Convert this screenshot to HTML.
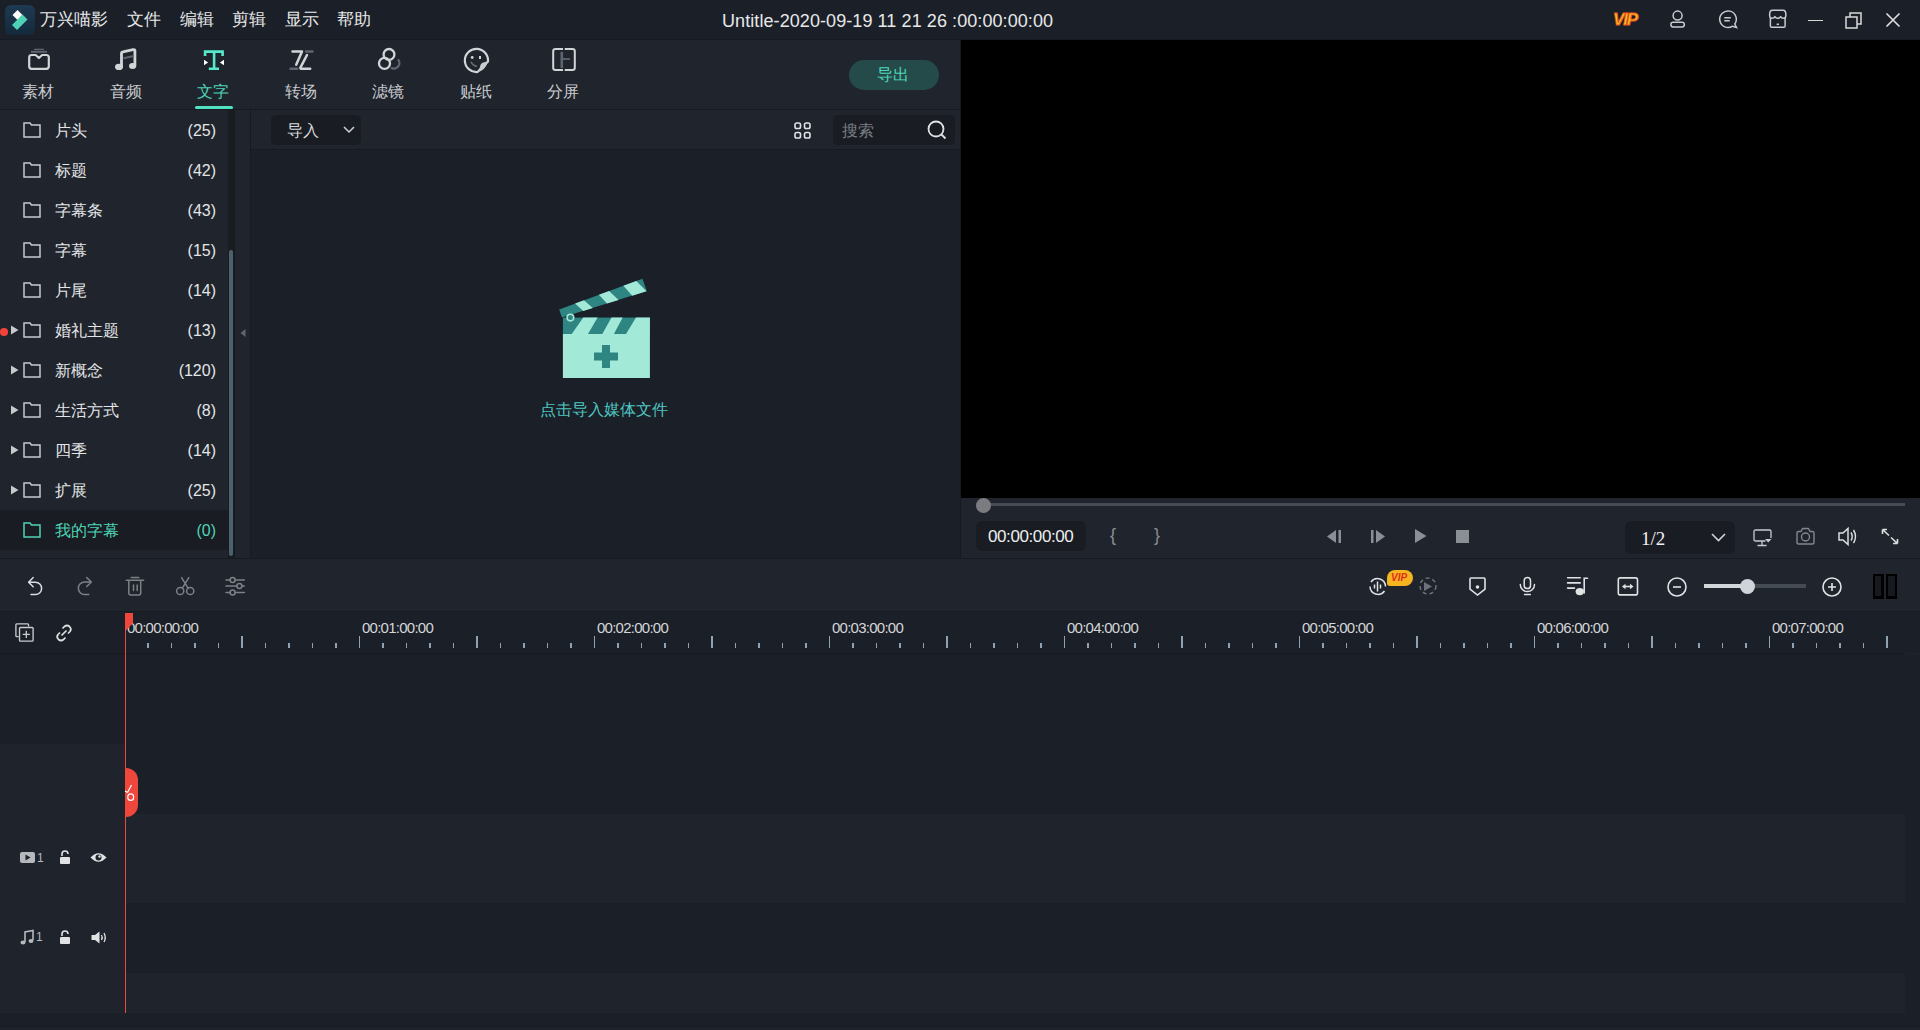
<!DOCTYPE html>
<html><head><meta charset="utf-8">
<style>
body{--title:#1b2028;--panel:#1f242d;--content:#1b1f28;--line:#171a20;--input:#191c22;--tlbar:#1f242d;--tra:#1b1f27;--trb:#1f242c;--bottom:#191c22}
*{box-sizing:border-box;margin:0;padding:0}
html,body{width:1920px;height:1030px;overflow:hidden;background:var(--panel);font-family:"Liberation Sans",sans-serif;color:#d6d8dc}
.a{position:absolute}
.t{position:absolute;white-space:nowrap;line-height:1}
svg{position:absolute;overflow:visible}
</style></head><body>
<!-- TITLE BAR -->
<div class="a" style="left:0;top:0;width:1920px;height:40px;background:var(--title)"></div>
<div class="a" style="left:5px;top:5px;width:30px;height:30px;border-radius:6px;background:linear-gradient(#1d3a52,#142a3c)"></div>
<svg style="left:5px;top:5px" width="30" height="30" viewBox="0 0 30 30">
<path d="M12.5 5 L17.5 10 L12.5 15 L7.5 10Z" fill="#fff"/>
<path d="M22.5 14.5 L12 25 L7 20 L17.5 9.5Z" fill="#4fd2b6"/>
</svg>
<div class="t" style="left:40px;top:11px;font-size:17px;color:#e8e8e8">万兴喵影</div>
<div class="t" style="left:127px;top:11px;font-size:17px;color:#e8e8e8">文件</div>
<div class="t" style="left:180px;top:11px;font-size:17px;color:#e8e8e8">编辑</div>
<div class="t" style="left:232px;top:11px;font-size:17px;color:#e8e8e8">剪辑</div>
<div class="t" style="left:285px;top:11px;font-size:17px;color:#e8e8e8">显示</div>
<div class="t" style="left:337px;top:11px;font-size:17px;color:#e8e8e8">帮助</div>
<div class="t" style="left:722px;top:12px;font-size:18px;letter-spacing:0.08px;color:#e8e8e8">Untitle-2020-09-19 11 21 26 :00:00:00:00</div>

<!-- title right icons -->
<div class="t" style="left:1613px;top:11px;font-size:17px;font-weight:bold;font-style:italic;color:#ffc425;-webkit-text-stroke:0.9px #f0561c;letter-spacing:-1.2px">VIP</div>
<svg style="left:1668px;top:9px" width="20" height="20" viewBox="0 0 20 20" fill="none" stroke="#c9cbcf" stroke-width="1.5">
<circle cx="9.6" cy="6.6" r="4.5"/><rect x="2.9" y="13.2" width="13.4" height="4.8" rx="2.2"/></svg>
<svg style="left:1718px;top:9px" width="20" height="20" viewBox="0 0 20 20" fill="none" stroke="#c9cbcf" stroke-width="1.5">
<path d="M16.8 15 A8.3 8.3 0 1 0 14.5 17.2 L18.5 18.5 Z"/><path d="M6.3 8.7H12.8 M6.3 11.8H11.7"/></svg>
<svg style="left:1768px;top:9px" width="20" height="20" viewBox="0 0 20 20" fill="none" stroke="#c9cbcf" stroke-width="1.5" stroke-linejoin="round"><path d="M1.6 6 Q1.6 1.3 4.5 1.3 H15 Q17.9 1.3 17.9 6 Q17.9 9.3 15.6 9.3 Q13.3 9.3 12.6 7.6 Q11.7 9.3 9.75 9.3 Q7.8 9.3 6.9 7.6 Q6.2 9.3 3.9 9.3 Q1.6 9.3 1.6 6Z"/><path d="M2.4 9 V17 Q2.4 18.3 3.7 18.3 H15.8 Q17.1 18.3 17.1 17 V9"/><path d="M8.6 15.3 H11"/></svg>
<div class="a" style="left:1808px;top:19.6px;width:14.5px;height:1.3px;background:#d8d8d8"></div>
<svg style="left:1845px;top:11px" width="18" height="18" viewBox="0 0 18 18" fill="none" stroke="#d8d8d8" stroke-width="1.5">
<rect x="1" y="6" width="11" height="11"/><path d="M5 6V2H16V13H12"/></svg>
<svg style="left:1885px;top:12px" width="16" height="16" viewBox="0 0 16 16" fill="none" stroke="#e0e0e0" stroke-width="1.6">
<path d="M1.5 1.5L14.5 14.5M14.5 1.5L1.5 14.5"/></svg>

<!-- LEFT PANEL -->
<div class="a" style="left:0;top:40px;width:961px;height:518px;background:var(--panel)"></div>
<div class="a" style="left:0;top:109px;width:961px;height:1px;background:var(--line)"></div>
<!-- tabs -->
<svg style="left:22px;top:44px" width="34" height="30" viewBox="0 0 34 30" fill="none">
<path d="M12.1 5.4 H21.9" stroke="#5e656e" stroke-width="1.4"/><path d="M9 7.8 H25" stroke="#5e656e" stroke-width="2"/>
<path d="M13.7 11 H9.7 Q7.2 11 7.2 13.5 V22.3 Q7.2 24.8 9.7 24.8 H24.3 Q26.8 24.8 26.8 22.3 V13.5 Q26.8 11 24.3 11 H20.1 L16.9 14 Z" stroke="#d2d5d8" stroke-width="2.2" stroke-linejoin="round"/></svg>
<svg style="left:108px;top:44px" width="34" height="30" viewBox="0 0 34 30" fill="none">
<path d="M13.5 23 V9 Q13.5 8 15 7.8 L25 5.6 Q26.9 5.3 26.9 6.5 V22" stroke="#d2d5d8" stroke-width="2.8"/>
<path d="M15.5 14.3 L25.7 12" stroke="#5e656e" stroke-width="2"/>
<ellipse cx="11" cy="22.9" rx="4" ry="3.1" fill="#d2d5d8"/><ellipse cx="24.6" cy="22" rx="3.6" ry="3" fill="#d2d5d8"/></svg>
<svg style="left:196px;top:44px" width="34" height="30" viewBox="0 0 34 30" fill="none">
<path d="M9.1 12 V7.6 H26.6 V12 M18.1 7.6 V24.8 M12.8 24.8 H23" stroke="#55eacb" stroke-width="2.6"/>
<path d="M8 15.7 V21.3 L12.1 18.5Z M28 15.7 V21.3 L23.9 18.5Z" fill="#ffffff"/></svg>
<svg style="left:284px;top:44px" width="34" height="30" viewBox="0 0 34 30" fill="none" stroke-width="2.5" stroke-linecap="round" stroke-linejoin="round">
<path d="M8.5 7.4 H18 L12.2 20.7" stroke="#d2d5d8"/><path d="M23 11 L16.3 23.9 Q16.5 24.8 17.5 24.8 H26.2" stroke="#d2d5d8"/>
<path d="M22 7.4 H28.5 M6.5 24.8 H13.3" stroke="#5e656e"/></svg>
<svg style="left:376px;top:47px" width="26" height="25" viewBox="0 0 26 25" fill="none" stroke-width="2">
<path d="M21.9 12.3 A5.5 5.5 0 0 1 15 20.75" stroke="#5e656e" stroke-width="2.3"/>
<circle cx="13" cy="7.4" r="5.4" stroke="#d2d5d8" stroke-width="2.3"/><circle cx="8.5" cy="16.4" r="5.5" stroke="#d2d5d8" stroke-width="2.3"/></svg>
<svg style="left:463px;top:47px" width="27" height="27" viewBox="0 0 27 27" fill="none">
<path d="M25 14.5 A11.6 11.6 0 1 0 14.5 25 Z" stroke="#d2d5d8" stroke-width="2.2"/>
<path d="M25 14.5 Q18 15 17.5 18 Q16.5 23 14.5 25 Q22 24 25 14.5Z" fill="#c9ccd0"/>
<circle cx="9.2" cy="10.5" r="1.4" fill="#d2d5d8"/><rect x="16" y="9" width="2" height="3" fill="#d2d5d8"/>
<path d="M8 14.8 Q9.5 18.5 14 19.5" stroke="#6b7178" stroke-width="1.6"/></svg>
<svg style="left:552px;top:48px" width="24" height="24" viewBox="0 0 24 24" fill="none" stroke-width="2">
<path d="M11 1 H3.5 Q1.2 1 1.2 3.3 V19.7 Q1.2 22 3.5 22 H11" stroke="#d2d5d8"/>
<path d="M12.7 1 H20.5 Q22.8 1 22.8 3.3 V19.7 Q22.8 22 20.5 22 H12.7" stroke="#d2d5d8"/>
<path d="M9.8 3.8 V20" stroke="#5e656e" stroke-width="2.6"/><path d="M11 11 H18" stroke="#5e656e" stroke-width="1.8"/></svg>
<div class="t" style="left:22px;top:84px;font-size:16px;color:#c9cbcf">素材</div>
<div class="t" style="left:110px;top:84px;font-size:16px;color:#c9cbcf">音频</div>
<div class="t" style="left:197px;top:84px;font-size:16px;color:#4ed3b6">文字</div>
<div class="t" style="left:285px;top:84px;font-size:16px;color:#c9cbcf">转场</div>
<div class="t" style="left:372px;top:84px;font-size:16px;color:#c9cbcf">滤镜</div>
<div class="t" style="left:460px;top:84px;font-size:16px;color:#c9cbcf">贴纸</div>
<div class="t" style="left:547px;top:84px;font-size:16px;color:#c9cbcf">分屏</div>
<div class="a" style="left:195px;top:106px;width:38px;height:3px;border-radius:2px;background:#4fe3c2"></div>
<div class="a" style="left:849px;top:60px;width:90px;height:30px;border-radius:15px;background:#244b4a"></div>
<div class="t" style="left:877px;top:67px;font-size:16px;color:#4fd8bb">导出</div>

<!-- folder list -->
<div class="a" style="left:0;top:510px;width:228px;height:40px;background:var(--input)"></div>
<svg style="left:23px;top:122px" width="18" height="16" viewBox="0 0 18 16" fill="none" stroke="#c8cacd" stroke-width="1.5"><path d="M1 1 H7 L8.5 3 H17 V15 H1Z"/></svg>
<div class="t" style="left:55px;top:123px;font-size:16px;color:#e4e5e7">片头</div>
<div class="t" style="right:1704px;top:123px;font-size:16px;color:#e4e5e7">(25)</div>
<svg style="left:23px;top:162px" width="18" height="16" viewBox="0 0 18 16" fill="none" stroke="#c8cacd" stroke-width="1.5"><path d="M1 1 H7 L8.5 3 H17 V15 H1Z"/></svg>
<div class="t" style="left:55px;top:163px;font-size:16px;color:#e4e5e7">标题</div>
<div class="t" style="right:1704px;top:163px;font-size:16px;color:#e4e5e7">(42)</div>
<svg style="left:23px;top:202px" width="18" height="16" viewBox="0 0 18 16" fill="none" stroke="#c8cacd" stroke-width="1.5"><path d="M1 1 H7 L8.5 3 H17 V15 H1Z"/></svg>
<div class="t" style="left:55px;top:203px;font-size:16px;color:#e4e5e7">字幕条</div>
<div class="t" style="right:1704px;top:203px;font-size:16px;color:#e4e5e7">(43)</div>
<svg style="left:23px;top:242px" width="18" height="16" viewBox="0 0 18 16" fill="none" stroke="#c8cacd" stroke-width="1.5"><path d="M1 1 H7 L8.5 3 H17 V15 H1Z"/></svg>
<div class="t" style="left:55px;top:243px;font-size:16px;color:#e4e5e7">字幕</div>
<div class="t" style="right:1704px;top:243px;font-size:16px;color:#e4e5e7">(15)</div>
<svg style="left:23px;top:282px" width="18" height="16" viewBox="0 0 18 16" fill="none" stroke="#c8cacd" stroke-width="1.5"><path d="M1 1 H7 L8.5 3 H17 V15 H1Z"/></svg>
<div class="t" style="left:55px;top:283px;font-size:16px;color:#e4e5e7">片尾</div>
<div class="t" style="right:1704px;top:283px;font-size:16px;color:#e4e5e7">(14)</div>
<svg style="left:23px;top:322px" width="18" height="16" viewBox="0 0 18 16" fill="none" stroke="#c8cacd" stroke-width="1.5"><path d="M1 1 H7 L8.5 3 H17 V15 H1Z"/></svg>
<div class="t" style="left:55px;top:323px;font-size:16px;color:#e4e5e7">婚礼主题</div>
<div class="t" style="right:1704px;top:323px;font-size:16px;color:#e4e5e7">(13)</div>
<svg style="left:10px;top:325px" width="8" height="10" viewBox="0 0 8 10"><path d="M1 0.5 L8.5 5 L1 9.5Z" fill="#c8cacd"/></svg>
<svg style="left:23px;top:362px" width="18" height="16" viewBox="0 0 18 16" fill="none" stroke="#c8cacd" stroke-width="1.5"><path d="M1 1 H7 L8.5 3 H17 V15 H1Z"/></svg>
<div class="t" style="left:55px;top:363px;font-size:16px;color:#e4e5e7">新概念</div>
<div class="t" style="right:1704px;top:363px;font-size:16px;color:#e4e5e7">(120)</div>
<svg style="left:10px;top:365px" width="8" height="10" viewBox="0 0 8 10"><path d="M1 0.5 L8.5 5 L1 9.5Z" fill="#c8cacd"/></svg>
<svg style="left:23px;top:402px" width="18" height="16" viewBox="0 0 18 16" fill="none" stroke="#c8cacd" stroke-width="1.5"><path d="M1 1 H7 L8.5 3 H17 V15 H1Z"/></svg>
<div class="t" style="left:55px;top:403px;font-size:16px;color:#e4e5e7">生活方式</div>
<div class="t" style="right:1704px;top:403px;font-size:16px;color:#e4e5e7">(8)</div>
<svg style="left:10px;top:405px" width="8" height="10" viewBox="0 0 8 10"><path d="M1 0.5 L8.5 5 L1 9.5Z" fill="#c8cacd"/></svg>
<svg style="left:23px;top:442px" width="18" height="16" viewBox="0 0 18 16" fill="none" stroke="#c8cacd" stroke-width="1.5"><path d="M1 1 H7 L8.5 3 H17 V15 H1Z"/></svg>
<div class="t" style="left:55px;top:443px;font-size:16px;color:#e4e5e7">四季</div>
<div class="t" style="right:1704px;top:443px;font-size:16px;color:#e4e5e7">(14)</div>
<svg style="left:10px;top:445px" width="8" height="10" viewBox="0 0 8 10"><path d="M1 0.5 L8.5 5 L1 9.5Z" fill="#c8cacd"/></svg>
<svg style="left:23px;top:482px" width="18" height="16" viewBox="0 0 18 16" fill="none" stroke="#c8cacd" stroke-width="1.5"><path d="M1 1 H7 L8.5 3 H17 V15 H1Z"/></svg>
<div class="t" style="left:55px;top:483px;font-size:16px;color:#e4e5e7">扩展</div>
<div class="t" style="right:1704px;top:483px;font-size:16px;color:#e4e5e7">(25)</div>
<svg style="left:10px;top:485px" width="8" height="10" viewBox="0 0 8 10"><path d="M1 0.5 L8.5 5 L1 9.5Z" fill="#c8cacd"/></svg>
<svg style="left:23px;top:522px" width="18" height="16" viewBox="0 0 18 16" fill="none" stroke="#4ed3b6" stroke-width="1.5"><path d="M1 1 H7 L8.5 3 H17 V15 H1Z"/></svg>
<div class="t" style="left:55px;top:523px;font-size:16px;color:#4ed3b6">我的字幕</div>
<div class="t" style="right:1704px;top:523px;font-size:16px;color:#4ed3b6">(0)</div>
<div class="a" style="left:0px;top:328px;width:7.5px;height:7.5px;border-radius:50%;background:#f0433a"></div>
<div class="a" style="left:228px;top:110px;width:5px;height:448px;background:#191c20"></div>
<div class="a" style="left:228.5px;top:250px;width:4.5px;height:306px;border-radius:2px;background:#4d606e"></div>
<div class="a" style="left:233px;top:110px;width:2px;height:448px;background:var(--line)"></div>
<div class="a" style="left:250px;top:110px;width:1px;height:448px;background:var(--line)"></div>
<svg style="left:240px;top:328px" width="6" height="10" viewBox="0 0 6 10"><path d="M5.5 1 L0.5 5 L5.5 9Z" fill="#5d6670"/></svg>
<!-- content toolbar -->
<div class="a" style="left:251px;top:150px;width:709px;height:408px;background:var(--content)"></div>
<div class="a" style="left:0;top:39px;width:1920px;height:1px;background:var(--line)"></div>
<div class="a" style="left:251px;top:149px;width:710px;height:1px;background:var(--line)"></div>
<div class="a" style="left:271px;top:115px;width:90px;height:30px;border-radius:5px;background:var(--input)"></div>
<div class="t" style="left:287px;top:123px;font-size:16px;color:#d6d8dc">导入</div>
<svg style="left:343px;top:126px" width="12" height="8" viewBox="0 0 12 8" fill="none" stroke="#d0d2d5" stroke-width="1.5"><path d="M1 1 L6 6 L11 1"/></svg>
<svg style="left:794px;top:122px" width="17" height="17" viewBox="0 0 17 17" fill="none" stroke="#e0e2e5" stroke-width="1.6"><rect x="1" y="1" width="5.5" height="5.5" rx="1.8"/><rect x="10.5" y="1" width="5.5" height="5.5" rx="1.8"/><rect x="1" y="10.5" width="5.5" height="5.5" rx="1.8"/><rect x="10.5" y="10.5" width="5.5" height="5.5" rx="1.8"/></svg>
<div class="a" style="left:833px;top:115px;width:122px;height:30px;border-radius:5px;background:var(--input)"></div>
<div class="t" style="left:842px;top:123px;font-size:16px;color:#7b7f85">搜索</div>
<svg style="left:927px;top:120px" width="20" height="20" viewBox="0 0 20 20" fill="none" stroke="#e0e2e5" stroke-width="1.8"><circle cx="9" cy="9" r="7.5"/><path d="M14.5 14.5 L18.5 18.5"/></svg>
<!-- clapboard -->
<svg style="left:550px;top:270px" width="110" height="115" viewBox="0 0 110 115">
<path d="M9.2 39.4 L92.4 8.8 L96.8 21.1 L11.9 47.6Z" fill="#2e8582"/>
<path d="M25.1 33.55 L34 30.28 L42.8 37.96 L33.3 40.92Z M48.9 24.8 L59.1 21.05 L68.6 29.9 L57 33.52Z M73.4 15.79 L86.3 11.04 L96.5 21.2 L82.2 25.66Z" fill="#a3e9d8"/>
<rect x="12.9" y="47.6" width="87" height="16.4" fill="#2e8582"/>
<path d="M33.3 47.6 H47.6 L38 64 H21.7Z M61.5 47.6 H72.7 L63.9 64 H52.3Z M86 47.6 H99.9 V64 H76Z" fill="#a3e9d8"/>
<circle cx="20.4" cy="47.6" r="3.3" fill="#2e8582" stroke="#a3e9d8" stroke-width="1.6"/>
<rect x="12.9" y="64" width="87" height="44" fill="#a3e9d8"/>
<path d="M52 75 H60 V82.5 H68 V90.5 H60 V98 H52 V90.5 H44 V82.5 H52Z" fill="#2e8582"/>
</svg>
<div class="t" style="left:540px;top:402px;font-size:16px;color:#4ec6c0">点击导入媒体文件</div>

<!-- PREVIEW -->
<div class="a" style="left:960px;top:40px;width:1px;height:518px;background:var(--line)"></div>
<div class="a" style="left:961px;top:40px;width:959px;height:458px;background:#000"></div>
<div class="a" style="left:983px;top:503px;width:922px;height:3px;background:#464c54"></div>
<div class="a" style="left:976px;top:498px;width:15px;height:15px;border-radius:50%;background:#7a7c80"></div>
<div class="a" style="left:976px;top:521px;width:110px;height:30px;border-radius:6px;background:var(--input)"></div>
<div class="t" style="left:988px;top:528px;font-size:17px;letter-spacing:-0.4px;color:#eceef0">00:00:00:00</div>
<div class="t" style="left:1110px;top:526px;font-size:18px;color:#8a8e93">{</div>
<div class="t" style="left:1154px;top:526px;font-size:18px;color:#8a8e93">}</div>
<svg style="left:1327px;top:530px" width="15" height="13" viewBox="0 0 15 13" fill="#8a8f96"><path d="M0 6.5 L9 0 V13Z"/><rect x="11.5" y="0" width="2.5" height="13"/></svg>
<svg style="left:1371px;top:530px" width="15" height="13" viewBox="0 0 15 13" fill="#8a8f96"><rect x="0" y="0" width="2.5" height="13"/><path d="M5 0 L14 6.5 L5 13Z"/></svg>
<svg style="left:1415px;top:529px" width="12" height="14" viewBox="0 0 12 14" fill="#8a8f96"><path d="M0 0 L11.5 7 L0 14Z"/></svg>
<div class="a" style="left:1456px;top:530px;width:13px;height:13px;background:#8a8f96"></div>
<div class="a" style="left:1625px;top:521px;width:110px;height:33px;border-radius:6px;background:var(--input)"></div>
<div class="t" style="left:1641px;top:529px;font-size:19px;font-family:'Liberation Serif',serif;color:#f0f0f0">1/2</div>
<svg style="left:1711px;top:533px" width="15" height="9" viewBox="0 0 15 9" fill="none" stroke="#d0d2d5" stroke-width="1.6"><path d="M1 1 L7.5 7.5 L14 1"/></svg>
<svg style="left:1753px;top:529px" width="20" height="18" viewBox="0 0 20 18" fill="none" stroke="#c9cbcf" stroke-width="1.3" stroke-linejoin="round"><path d="M12.5 12 H2.5 Q1 12 1 10.5 V2.5 Q1 1 2.5 1 H16.5 Q18 1 18 2.5 V9 M9 12 V16.5 M4.5 16.5 H13.5"/><path d="M12 10 H18.5 L15.2 13.5Z" fill="#c9cbcf" stroke="none"/></svg>
<svg style="left:1796px;top:527px" width="19" height="18" viewBox="0 0 19 18" fill="none" stroke="#84888d" stroke-width="1.4" stroke-linejoin="round"><path d="M2.5 4.5 H5 L6.5 1.5 H12.5 L14 4.5 H16.5 Q18 4.5 18 6 V15.5 Q18 17 16.5 17 H2.5 Q1 17 1 15.5 V6 Q1 4.5 2.5 4.5Z"/><circle cx="9.5" cy="10" r="4"/></svg>
<svg style="left:1838px;top:527px" width="19" height="19" viewBox="0 0 19 19" fill="none" stroke="#dcdee0" stroke-width="1.5"><path d="M1 6 H5 L10 1.5 V17.5 L5 13 H1Z"/><path d="M13 5.5 Q15.5 9.5 13 13.5 M15.5 3 Q19.5 9.5 15.5 16"/></svg>
<svg style="left:1881px;top:528px" width="18" height="17" viewBox="0 0 18 17" fill="none" stroke="#dcdee0" stroke-width="1.6"><path d="M1.5 1.5 L8 7.5 M1.5 1.5 V6 M1.5 1.5 H6 M16.5 15.5 L10 9.5 M16.5 15.5 V11 M16.5 15.5 H12"/></svg>
<!-- separator -->
<div class="a" style="left:0;top:558px;width:1920px;height:1px;background:var(--line)"></div>
<!-- TIMELINE TOOLBAR -->
<div class="a" style="left:0;top:559px;width:1920px;height:52px;background:var(--tlbar)"></div>
<div class="a" style="left:0;top:611px;width:1920px;height:1px;background:var(--line)"></div>
<svg style="left:0;top:560px" width="260" height="52" viewBox="0 0 260 52" fill="none" stroke-width="1.5" stroke-linecap="round" stroke-linejoin="round">
<path d="M33.2 17.6 L28.6 22.3 L33.2 26.7 M29 22.3 H35.5 A6.1 6.1 0 0 1 35.5 34.5 H31" stroke="#dcdee0"/>
<path d="M86.7 17.6 L91.4 22 L86.7 26.5 M91.2 22 H84.6 A6.2 6.2 0 0 0 84.6 34.5 H88.7" stroke="#7d8186"/>
<path d="M126.3 20.3 H143.6 M131.3 17.6 H138.8 M128.8 20.3 V33 Q128.8 34.9 130.7 34.9 H138.8 Q140.7 34.9 140.7 33 V20.3 M133.5 25 V30.5 M137.2 25 V30.5" stroke="#7d8186"/>
<circle cx="180.2" cy="31" r="3.6" stroke="#7d8186"/><circle cx="190.2" cy="31" r="3.6" stroke="#7d8186"/>
<path d="M181.6 17.6 L187.9 27.8 M188.8 17.6 L182.5 27.8" stroke="#7d8186"/>
<path d="M226 20 H230 M235.2 20 H244.3 M226 26.1 H237 M241.8 26.1 H244.3 M226 32.5 H230 M235.2 32.5 H244.3" stroke="#7d8186"/>
<circle cx="232.6" cy="20" r="2.5" stroke="#7d8186"/><circle cx="239.4" cy="26.1" r="2.5" stroke="#7d8186"/><circle cx="232.6" cy="32.5" r="2.5" stroke="#7d8186"/>
</svg>
<svg style="left:1368px;top:577px" width="20" height="19" viewBox="0 0 20 19" fill="none" stroke="#e0e2e4" stroke-width="1.5"><path d="M17.5 9.5 A8 8 0 0 0 3 5 M2 9.5 A8 8 0 0 0 16.5 14"/><path d="M9.5 4.5 V14.5 M6.5 7.5 V11.5 M12.5 7.5 V11.5"/></svg>
<div class="a" style="left:1387px;top:570px;width:26px;height:16px;border-radius:8px 8px 8px 3px;background:#f6b420"></div>
<div class="t" style="left:1391px;top:573px;font-size:10px;font-weight:bold;font-style:italic;color:#e02f1c">VIP</div>
<svg style="left:1419px;top:577px" width="18" height="18" viewBox="0 0 18 18" fill="none" stroke="#6e7278" stroke-width="1.5" stroke-dasharray="4 3"><circle cx="9" cy="9" r="8"/></svg>
<svg style="left:1424px;top:582px" width="8" height="9" viewBox="0 0 8 9" fill="#6e7278"><path d="M0 0 L8 4.5 L0 9Z"/></svg>
<svg style="left:1469px;top:577px" width="17" height="19" viewBox="0 0 17 19" fill="none" stroke="#e0e2e4" stroke-width="1.6"><path d="M1 2 Q1 1 2 1 H15 Q16 1 16 2 V12 L8.5 18 L1 12Z"/><circle cx="8.5" cy="10" r="1" fill="#e0e2e4"/></svg>
<svg style="left:1510px;top:570px" width="34" height="30" viewBox="0 0 34 30" fill="none" stroke="#e0e2e4" stroke-width="1.5" stroke-linecap="round"><rect x="14.2" y="7.6" width="6.3" height="11" rx="3.15"/><path d="M10.3 14.5 A7.1 7.1 0 0 0 24.5 14.5 M14.5 24.5 H20.3"/></svg>
<svg style="left:1560px;top:570px" width="34" height="30" viewBox="0 0 34 30" fill="none" stroke="#e0e2e4" stroke-width="1.6" stroke-linecap="round"><path d="M7.6 7.8 H20.2 M7.6 12.9 H20.2 M7.6 18.1 H14.5 M24.2 23 V8.3 H27.5"/><ellipse cx="19.8" cy="21.6" rx="4.2" ry="3.6" fill="#e0e2e4" stroke="none"/></svg>
<svg style="left:1610px;top:570px" width="34" height="30" viewBox="0 0 34 30" fill="none" stroke="#e0e2e4" stroke-width="1.6"><rect x="8.3" y="7.9" width="19.2" height="17" rx="2"/><path d="M13.5 16.5 H22"/><path d="M12 16.5 L15.5 13.8 V19.2Z M23.5 16.5 L20 13.8 V19.2Z" fill="#e0e2e4" stroke="none"/></svg>
<svg style="left:1667px;top:577px" width="20" height="20" viewBox="0 0 20 20" fill="none" stroke="#e0e2e4" stroke-width="1.6"><circle cx="10" cy="10" r="9"/><path d="M6 10 H14"/></svg>
<div class="a" style="left:1704px;top:584px;width:102px;height:4px;background:#454b53"></div>
<div class="a" style="left:1704px;top:584px;width:44px;height:4px;background:#d3d6d9"></div>
<div class="a" style="left:1740px;top:579px;width:15px;height:15px;border-radius:50%;background:#cfd4da"></div>
<svg style="left:1822px;top:577px" width="20" height="20" viewBox="0 0 20 20" fill="none" stroke="#e0e2e4" stroke-width="1.6"><circle cx="10" cy="10" r="9"/><path d="M6 10 H14 M10 6 V14"/></svg>
<div class="a" style="left:1873px;top:574px;width:11px;height:25px;background:#16191e;border:2px solid #000;border-right-width:3px;border-bottom-width:3px"></div>
<div class="a" style="left:1886px;top:574px;width:11px;height:25px;background:#16191e;border:2px solid #000;border-bottom-width:3px"></div>

<!-- RULER -->
<div class="a" style="left:0;top:612px;width:1920px;height:41px;background:var(--tra)"></div>
<div class="a" style="left:0;top:653px;width:1905px;height:1px;background:var(--line)"></div>
<svg style="left:15px;top:623px" width="19" height="19" viewBox="0 0 21 21" fill="none" stroke="#c9cbcf" stroke-width="1.5"><path d="M4 15 H2 Q1 15 1 14 V2 Q1 1 2 1 H14 Q15 1 15 2 V4"/><rect x="5" y="5" width="15" height="15" rx="1"/><path d="M12.5 8.5 V16.5 M8.5 12.5 H16.5"/></svg>
<svg style="left:55px;top:624px" width="18" height="18" viewBox="0 0 18 18" fill="none" stroke="#dcdee0" stroke-width="1.7"><path d="M7.5 4.5 L9.5 2.5 Q12 0.5 14.5 2.5 Q17 5 15 7.5 L13 9.5 M10.5 13.5 L8.5 15.5 Q6 17.5 3.5 15.5 Q1 13 3 10.5 L5 8.5 M6.5 11.5 L11.5 6.5"/></svg>
<div class="a" style="left:147.3px;top:643px;width:1.5px;height:5px;background:#8ea2b3"></div>
<div class="a" style="left:170.8px;top:643px;width:1.5px;height:5px;background:#8ea2b3"></div>
<div class="a" style="left:194.3px;top:643px;width:1.5px;height:5px;background:#8ea2b3"></div>
<div class="a" style="left:217.8px;top:643px;width:1.5px;height:5px;background:#8ea2b3"></div>
<div class="a" style="left:241.3px;top:636px;width:1.5px;height:12px;background:#8ea2b3"></div>
<div class="a" style="left:264.8px;top:643px;width:1.5px;height:5px;background:#8ea2b3"></div>
<div class="a" style="left:288.3px;top:643px;width:1.5px;height:5px;background:#8ea2b3"></div>
<div class="a" style="left:311.8px;top:643px;width:1.5px;height:5px;background:#8ea2b3"></div>
<div class="a" style="left:335.3px;top:643px;width:1.5px;height:5px;background:#8ea2b3"></div>
<div class="a" style="left:358.8px;top:636px;width:1.5px;height:12px;background:#8ea2b3"></div>
<div class="a" style="left:382.3px;top:643px;width:1.5px;height:5px;background:#8ea2b3"></div>
<div class="a" style="left:405.8px;top:643px;width:1.5px;height:5px;background:#8ea2b3"></div>
<div class="a" style="left:429.3px;top:643px;width:1.5px;height:5px;background:#8ea2b3"></div>
<div class="a" style="left:452.8px;top:643px;width:1.5px;height:5px;background:#8ea2b3"></div>
<div class="a" style="left:476.3px;top:636px;width:1.5px;height:12px;background:#8ea2b3"></div>
<div class="a" style="left:499.8px;top:643px;width:1.5px;height:5px;background:#8ea2b3"></div>
<div class="a" style="left:523.3px;top:643px;width:1.5px;height:5px;background:#8ea2b3"></div>
<div class="a" style="left:546.8px;top:643px;width:1.5px;height:5px;background:#8ea2b3"></div>
<div class="a" style="left:570.3px;top:643px;width:1.5px;height:5px;background:#8ea2b3"></div>
<div class="a" style="left:593.8px;top:636px;width:1.5px;height:12px;background:#8ea2b3"></div>
<div class="a" style="left:617.3px;top:643px;width:1.5px;height:5px;background:#8ea2b3"></div>
<div class="a" style="left:640.8px;top:643px;width:1.5px;height:5px;background:#8ea2b3"></div>
<div class="a" style="left:664.3px;top:643px;width:1.5px;height:5px;background:#8ea2b3"></div>
<div class="a" style="left:687.8px;top:643px;width:1.5px;height:5px;background:#8ea2b3"></div>
<div class="a" style="left:711.3px;top:636px;width:1.5px;height:12px;background:#8ea2b3"></div>
<div class="a" style="left:734.8px;top:643px;width:1.5px;height:5px;background:#8ea2b3"></div>
<div class="a" style="left:758.3px;top:643px;width:1.5px;height:5px;background:#8ea2b3"></div>
<div class="a" style="left:781.8px;top:643px;width:1.5px;height:5px;background:#8ea2b3"></div>
<div class="a" style="left:805.3px;top:643px;width:1.5px;height:5px;background:#8ea2b3"></div>
<div class="a" style="left:828.8px;top:636px;width:1.5px;height:12px;background:#8ea2b3"></div>
<div class="a" style="left:852.3px;top:643px;width:1.5px;height:5px;background:#8ea2b3"></div>
<div class="a" style="left:875.8px;top:643px;width:1.5px;height:5px;background:#8ea2b3"></div>
<div class="a" style="left:899.3px;top:643px;width:1.5px;height:5px;background:#8ea2b3"></div>
<div class="a" style="left:922.8px;top:643px;width:1.5px;height:5px;background:#8ea2b3"></div>
<div class="a" style="left:946.3px;top:636px;width:1.5px;height:12px;background:#8ea2b3"></div>
<div class="a" style="left:969.8px;top:643px;width:1.5px;height:5px;background:#8ea2b3"></div>
<div class="a" style="left:993.3px;top:643px;width:1.5px;height:5px;background:#8ea2b3"></div>
<div class="a" style="left:1016.8px;top:643px;width:1.5px;height:5px;background:#8ea2b3"></div>
<div class="a" style="left:1040.3px;top:643px;width:1.5px;height:5px;background:#8ea2b3"></div>
<div class="a" style="left:1063.8px;top:636px;width:1.5px;height:12px;background:#8ea2b3"></div>
<div class="a" style="left:1087.3px;top:643px;width:1.5px;height:5px;background:#8ea2b3"></div>
<div class="a" style="left:1110.8px;top:643px;width:1.5px;height:5px;background:#8ea2b3"></div>
<div class="a" style="left:1134.3px;top:643px;width:1.5px;height:5px;background:#8ea2b3"></div>
<div class="a" style="left:1157.8px;top:643px;width:1.5px;height:5px;background:#8ea2b3"></div>
<div class="a" style="left:1181.3px;top:636px;width:1.5px;height:12px;background:#8ea2b3"></div>
<div class="a" style="left:1204.8px;top:643px;width:1.5px;height:5px;background:#8ea2b3"></div>
<div class="a" style="left:1228.3px;top:643px;width:1.5px;height:5px;background:#8ea2b3"></div>
<div class="a" style="left:1251.8px;top:643px;width:1.5px;height:5px;background:#8ea2b3"></div>
<div class="a" style="left:1275.3px;top:643px;width:1.5px;height:5px;background:#8ea2b3"></div>
<div class="a" style="left:1298.8px;top:636px;width:1.5px;height:12px;background:#8ea2b3"></div>
<div class="a" style="left:1322.3px;top:643px;width:1.5px;height:5px;background:#8ea2b3"></div>
<div class="a" style="left:1345.8px;top:643px;width:1.5px;height:5px;background:#8ea2b3"></div>
<div class="a" style="left:1369.3px;top:643px;width:1.5px;height:5px;background:#8ea2b3"></div>
<div class="a" style="left:1392.8px;top:643px;width:1.5px;height:5px;background:#8ea2b3"></div>
<div class="a" style="left:1416.3px;top:636px;width:1.5px;height:12px;background:#8ea2b3"></div>
<div class="a" style="left:1439.8px;top:643px;width:1.5px;height:5px;background:#8ea2b3"></div>
<div class="a" style="left:1463.3px;top:643px;width:1.5px;height:5px;background:#8ea2b3"></div>
<div class="a" style="left:1486.8px;top:643px;width:1.5px;height:5px;background:#8ea2b3"></div>
<div class="a" style="left:1510.3px;top:643px;width:1.5px;height:5px;background:#8ea2b3"></div>
<div class="a" style="left:1533.8px;top:636px;width:1.5px;height:12px;background:#8ea2b3"></div>
<div class="a" style="left:1557.3px;top:643px;width:1.5px;height:5px;background:#8ea2b3"></div>
<div class="a" style="left:1580.8px;top:643px;width:1.5px;height:5px;background:#8ea2b3"></div>
<div class="a" style="left:1604.3px;top:643px;width:1.5px;height:5px;background:#8ea2b3"></div>
<div class="a" style="left:1627.8px;top:643px;width:1.5px;height:5px;background:#8ea2b3"></div>
<div class="a" style="left:1651.3px;top:636px;width:1.5px;height:12px;background:#8ea2b3"></div>
<div class="a" style="left:1674.8px;top:643px;width:1.5px;height:5px;background:#8ea2b3"></div>
<div class="a" style="left:1698.3px;top:643px;width:1.5px;height:5px;background:#8ea2b3"></div>
<div class="a" style="left:1721.8px;top:643px;width:1.5px;height:5px;background:#8ea2b3"></div>
<div class="a" style="left:1745.3px;top:643px;width:1.5px;height:5px;background:#8ea2b3"></div>
<div class="a" style="left:1768.8px;top:636px;width:1.5px;height:12px;background:#8ea2b3"></div>
<div class="a" style="left:1792.3px;top:643px;width:1.5px;height:5px;background:#8ea2b3"></div>
<div class="a" style="left:1815.8px;top:643px;width:1.5px;height:5px;background:#8ea2b3"></div>
<div class="a" style="left:1839.3px;top:643px;width:1.5px;height:5px;background:#8ea2b3"></div>
<div class="a" style="left:1862.8px;top:643px;width:1.5px;height:5px;background:#8ea2b3"></div>
<div class="a" style="left:1886.3px;top:636px;width:1.5px;height:12px;background:#8ea2b3"></div>
<div class="t" style="left:127px;top:620px;font-size:15px;letter-spacing:-0.75px;color:#d4d6d9">00:00:00:00</div>
<div class="t" style="left:362px;top:620px;font-size:15px;letter-spacing:-0.75px;color:#d4d6d9">00:01:00:00</div>
<div class="t" style="left:597px;top:620px;font-size:15px;letter-spacing:-0.75px;color:#d4d6d9">00:02:00:00</div>
<div class="t" style="left:832px;top:620px;font-size:15px;letter-spacing:-0.75px;color:#d4d6d9">00:03:00:00</div>
<div class="t" style="left:1067px;top:620px;font-size:15px;letter-spacing:-0.75px;color:#d4d6d9">00:04:00:00</div>
<div class="t" style="left:1302px;top:620px;font-size:15px;letter-spacing:-0.75px;color:#d4d6d9">00:05:00:00</div>
<div class="t" style="left:1537px;top:620px;font-size:15px;letter-spacing:-0.75px;color:#d4d6d9">00:06:00:00</div>
<div class="t" style="left:1772px;top:620px;font-size:15px;letter-spacing:-0.75px;color:#d4d6d9">00:07:00:00</div>

<!-- TRACKS -->
<div class="a" style="left:0;top:654px;width:1920px;height:372px;background:var(--tra)"></div>
<div class="a" style="left:0;top:744px;width:125px;height:269px;background:var(--trb)"></div>
<div class="a" style="left:126px;top:814px;width:1779px;height:89px;background:var(--trb)"></div>
<div class="a" style="left:126px;top:973px;width:1779px;height:40px;background:var(--trb)"></div>
<div class="a" style="left:0;top:1026px;width:1920px;height:1px;background:var(--line)"></div>
<div class="a" style="left:0;top:1027px;width:1920px;height:3px;background:var(--trb)"></div>
<svg style="left:20px;top:851px" width="24" height="13" viewBox="0 0 24 13"><rect x="0" y="1" width="15" height="11" rx="2" fill="#b5b8bc"/><path d="M5.5 3.5 L10.5 6.5 L5.5 9.5Z" fill="#1f232a"/><text x="17" y="11" font-size="12" fill="#b5b8bc" font-family="Liberation Sans">1</text></svg>
<svg style="left:59px;top:850px" width="13" height="15" viewBox="0 0 13 15" fill="none"><path d="M3 6 V4 Q3 1 6 1 Q9 1 9 4" stroke="#e0e2e4" stroke-width="1.6"/><rect x="1" y="7" width="10" height="7" rx="1" fill="#e0e2e4"/></svg>
<svg style="left:90px;top:852px" width="17" height="11" viewBox="0 0 17 11"><path d="M0.5 5.5 Q8.5 -3 16.5 5.5 Q8.5 14 0.5 5.5Z" fill="#e0e2e4"/><circle cx="8.5" cy="5.5" r="3" fill="#1f232a"/><circle cx="9.5" cy="4.5" r="1.2" fill="#e0e2e4"/></svg>
<svg style="left:20px;top:930px" width="24" height="15" viewBox="0 0 24 15"><path d="M5 12 V2 L13 0.5 V10" fill="none" stroke="#b5b8bc" stroke-width="1.6"/><ellipse cx="3" cy="12.5" rx="2.5" ry="2" fill="#b5b8bc"/><ellipse cx="11" cy="11" rx="2.5" ry="2" fill="#b5b8bc"/><text x="16" y="11" font-size="12" fill="#b5b8bc" font-family="Liberation Sans">1</text></svg>
<svg style="left:59px;top:930px" width="13" height="15" viewBox="0 0 13 15" fill="none"><path d="M3 6 V4 Q3 1 6 1 Q9 1 9 4" stroke="#e0e2e4" stroke-width="1.6"/><rect x="1" y="7" width="10" height="7" rx="1" fill="#e0e2e4"/></svg>
<svg style="left:91px;top:931px" width="16" height="13" viewBox="0 0 16 13"><path d="M0.5 4 H4 L8.5 0.5 V12.5 L4 9 H0.5Z" fill="#e0e2e4"/><path d="M10.5 4 Q12 6.5 10.5 9 M13 2 Q15.5 6.5 13 11" fill="none" stroke="#e0e2e4" stroke-width="1.3"/></svg>
<!-- playhead -->
<div class="a" style="left:124.5px;top:613px;width:1.5px;height:400px;background:#f0473d"></div>
<svg style="left:125px;top:613px" width="9" height="19" viewBox="0 0 9 19"><path d="M0 0 H8 V10 L0 18.5Z" fill="#f0473d"/></svg>
<div class="a" style="left:125px;top:768px;width:13px;height:49px;border-radius:0 12px 12px 0;background:#f0473d"></div>
<svg style="left:124px;top:784px" width="12" height="18" viewBox="0 0 12 18" fill="none" stroke="#fff" stroke-width="1.2"><path d="M7.5 1 L3.5 8.5 M3.5 8.5 L1 7"/><rect x="3.8" y="9.8" width="5.8" height="6.6" rx="2.9"/></svg>
</body></html>
